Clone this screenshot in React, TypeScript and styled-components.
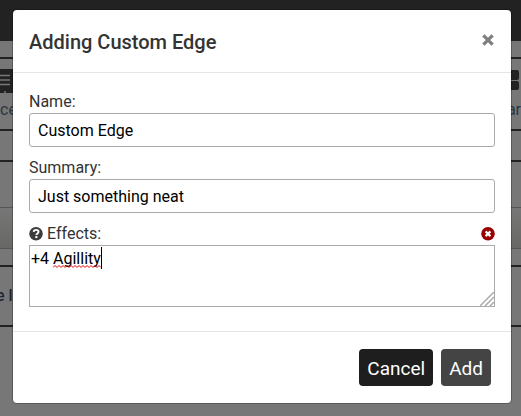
import React, { useState } from "react";
import styled, { createGlobalStyle } from "styled-components";

const GlobalStyle = createGlobalStyle`
  * { box-sizing: border-box; }
  body {
    margin: 0;
    background: #777;
    color: #333;
    font: 16px/22px Roboto, sans-serif;
  }
`;

const Screen = styled.div`
  display: grid;
  grid-template-columns: minmax(0, 1fr);
  min-height: 100vh;
  overflow: hidden;
  > * { grid-area: 1 / 1; }
`;

const Page = styled.div`
  display: flex;
  flex-direction: column;
  min-width: 0;
`;

const NavBar = styled.div`
  height: 41px;
  background: #222;
`;

const Strip = styled.div<{ $height: number; $ruled?: boolean }>`
  flex: none;
  height: ${(p) => p.$height}px;
  border-bottom: ${(p) => (p.$ruled ? "2px solid #222" : "none")};
`;

const Toolbar = styled.div`
  display: flex;
  justify-content: space-between;
  height: 29px;
`;

const MenuTile = styled.div`
  width: 40px;
  height: 24px;
  background: #222;
  svg { display: block; }
`;

const SideTiles = styled.div`
  display: grid;
  gap: 1px;
  width: 40px;
  height: 21px;
  margin: 1px 2px 0 0;
  padding-bottom: 1px;
`;

const Tile = styled.div`
  background: #222;
  border-radius: 2px;
`;

const PageText = styled.div`
  display: flex;
  justify-content: space-between;
  height: 33px;
  padding-top: 1px;
  border-bottom: 2px solid #222;
  overflow: hidden;
  color: #2b3640;
`;

const Panel = styled.div`
  height: 42px;
  border: solid #555;
  border-width: 1px 0;
  background: linear-gradient(#777, #686866);
`;

const Notice = styled.div`
  height: 60px;
  margin-left: -4px;
  padding-top: 18px;
  border-bottom: 2px solid #222;
  font-weight: 500;
  color: #1c2635;
`;

const Overlay = styled.div`
  z-index: 1;
  padding: 10px 10px 13px 13px;
`;

const Dialog = styled.section`
  background: #fff;
  border-radius: 4px;
  box-shadow: 0 0 0 1px rgba(0, 0, 0, 0.25);
`;

const Header = styled.header`
  display: flex;
  align-items: flex-start;
  justify-content: space-between;
  padding: 20px 16px 18px;
  border-bottom: 1px solid #e5e5e5;
`;

const Title = styled.h1`
  margin: 0;
  font-size: 20px;
  font-weight: 500;
  line-height: 24px;
`;

const IconButton = styled.button`
  display: flex;
  padding: 0;
  border: 0;
  background: none;
  cursor: pointer;
`;

const CloseButton = styled(IconButton)`
  padding-top: 2px;
`;

const Form = styled.form`
  margin: 0;
`;

const Fields = styled.div`
  display: grid;
  gap: 10px;
  padding: 18px 16px 24px;
`;

const Field = styled.div`
  display: grid;
`;

const LabelRow = styled.div`
  display: flex;
  align-items: center;
  height: 22px;
  gap: 4px;
`;

const Label = styled.label`
  flex: 1;
`;

const TextInput = styled.input`
  width: 100%;
  height: 34px;
  padding: 0 8px;
  border: 1px solid #aaa;
  border-radius: 3px;
  background: #fff;
  color: #000;
  font: inherit;
  outline: none;
`;

const EffectsBox = styled.div`
  position: relative;
  display: grid;
`;

const TextArea = styled.textarea`
  width: 100%;
  height: 62px;
  margin: 0;
  padding: 2px 1px;
  border: 1px solid #aaa;
  border-radius: 0;
  background: #fff;
  color: #000;
  font: inherit;
  outline: none;
  resize: none;
`;

const SpellingMark = styled.svg`
  position: absolute;
  top: 2px;
  left: 24px;
  pointer-events: none;
`;

const Grip = styled.svg`
  position: absolute;
  right: 1px;
  bottom: 1px;
  pointer-events: none;
`;

const Footer = styled.footer`
  display: flex;
  justify-content: flex-end;
  gap: 8px;
  padding: 17px 20px;
  border-top: 1px solid #e5e5e5;
`;

const Button = styled.button<{ $dark?: boolean }>`
  height: 37px;
  padding: 2px 8px 0;
  border: 0;
  border-radius: 4px;
  background: ${(p) => (p.$dark ? "#1e1e1e" : "#444")};
  color: #fff;
  font: 19px/35px Roboto, sans-serif;
  cursor: pointer;
`;

function CrossIcon() {
  return (
    <svg width="14" height="16" viewBox="0 0 14 16" aria-hidden="true">
      <path d="M2.4 3.4l9.2 9.2M11.6 3.4l-9.2 9.2" stroke="#7f7f7f" strokeWidth="3.3" />
    </svg>
  );
}

function HelpIcon() {
  return (
    <svg width="14" height="14" viewBox="0 0 14 14" aria-hidden="true">
      <circle cx="7" cy="6.8" r="6.8" fill="#3c3c3c" />
      <path d="M4.7 4.9C4.8 3.5 5.8 2.9 7.1 2.9c1.4 0 2.4.7 2.4 1.9 0 1.6-2.1 1.6-2.1 3.2" fill="none" stroke="#fff" strokeWidth="1.9" />
      <path d="M6.3 9.1h2.1v2H6.3z" fill="#fff" />
    </svg>
  );
}

function RemoveIcon() {
  return (
    <svg width="14" height="14" viewBox="0 0 14 14" aria-hidden="true">
      <circle cx="7" cy="6.8" r="6.8" fill="#900" />
      <path d="M4.6 4.4l4.8 4.8M9.4 4.4l-4.8 4.8" stroke="#fff" strokeWidth="2.3" />
    </svg>
  );
}

const wave = "M0 20.5" + Array.from({ length: 12 }, () => "l2 -2l2 2").join("");

export default function App() {
  const [name, setName] = useState("Custom Edge");
  const [summary, setSummary] = useState("Just something neat");
  const [effects, setEffects] = useState("+4 Agillity");
  const unchanged = effects === "+4 Agillity";

  return (
    <>
      <GlobalStyle />
      <Screen>
        <Page aria-hidden="true">
          <NavBar />
          <Strip $height={18} $ruled />
          <Strip $height={10} />
          <Toolbar>
            <MenuTile>
              <svg width="13" height="24" viewBox="0 0 13 24">
                <path d="M0 6.5h10M0 11h10M0 15.5h10M4 23h2" stroke="#777" strokeWidth="1.5" />
              </svg>
            </MenuTile>
            <SideTiles>
              <Tile />
              <Tile />
            </SideTiles>
          </Toolbar>
          <PageText>
            <span>ce</span>
            <span>ar</span>
          </PageText>
          <Strip $height={31} $ruled />
          <Strip $height={45} />
          <Panel />
          <Strip $height={18} $ruled />
          <Notice>e lo</Notice>
        </Page>

        <Overlay>
          <Dialog role="dialog" aria-modal="true" aria-labelledby="dialog-title">
            <Header>
              <Title id="dialog-title">Adding Custom Edge</Title>
              <CloseButton type="button" aria-label="Close">
                <CrossIcon />
              </CloseButton>
            </Header>
            <Form onSubmit={(e) => e.preventDefault()}>
              <Fields>
                <Field>
                  <Label htmlFor="name">Name:</Label>
                  <TextInput id="name" value={name} onChange={(e) => setName(e.target.value)} />
                </Field>
                <Field>
                  <Label htmlFor="summary">Summary:</Label>
                  <TextInput id="summary" value={summary} onChange={(e) => setSummary(e.target.value)} />
                </Field>
                <Field>
                  <LabelRow>
                    <IconButton type="button" aria-label="Help">
                      <HelpIcon />
                    </IconButton>
                    <Label htmlFor="effects">Effects:</Label>
                    <IconButton type="button" aria-label="Remove effects">
                      <RemoveIcon />
                    </IconButton>
                  </LabelRow>
                  <EffectsBox>
                    <TextArea
                      id="effects"
                      spellCheck={false}
                      value={effects}
                      onChange={(e) => setEffects(e.target.value)}
                    />
                    {unchanged && (
                      <SpellingMark width="50" height="22" viewBox="0 0 50 22" aria-hidden="true">
                        <path d={wave} fill="none" stroke="#e00000" />
                        <path d="M48.5 0v22" stroke="#000" />
                      </SpellingMark>
                    )}
                    <Grip width="14" height="14" viewBox="0 0 14 14" aria-hidden="true">
                      <path d="M0 14L14 0M5 14l9-9M10 14l4-4" stroke="#aaa" strokeWidth="1.5" />
                    </Grip>
                  </EffectsBox>
                </Field>
              </Fields>
              <Footer>
                <Button type="button" $dark>Cancel</Button>
                <Button type="submit">Add</Button>
              </Footer>
            </Form>
          </Dialog>
        </Overlay>
      </Screen>
    </>
  );
}
